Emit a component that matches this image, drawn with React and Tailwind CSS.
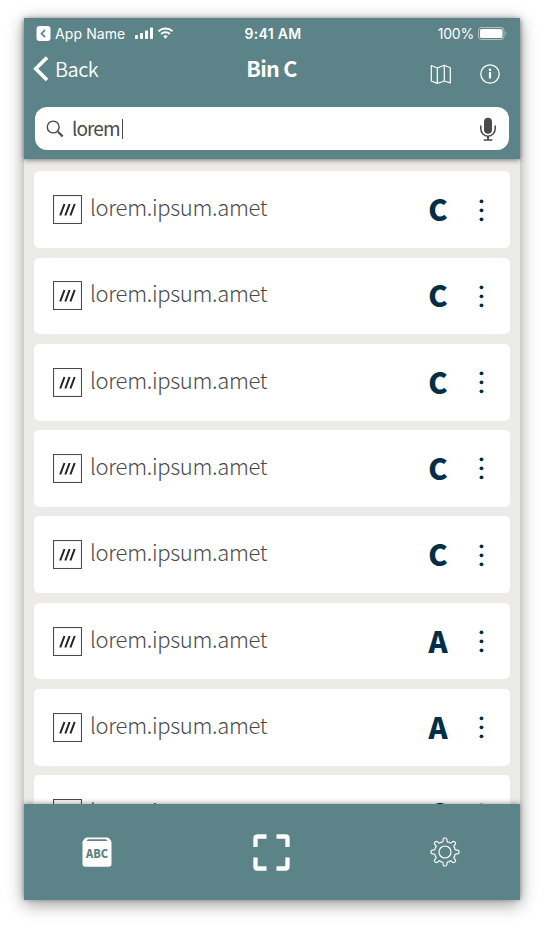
import React from 'react';

const rows = ['C', 'C', 'C', 'C', 'C', 'A', 'A', 'C'];

const gearPath = (() => {
    const at = (deg, r) => {
        const a = (deg * Math.PI) / 180;
        return `${(15 + r * Math.sin(a)).toFixed(2)} ${(15 - r * Math.cos(a)).toFixed(2)}`;
    };
    let d = `M${at(-8.5, 12.6)}`;
    for (let i = 0; i < 8; i++) {
        const t = i * 45;
        d += ` Q${at(t - 7.5, 14)} ${at(t - 3, 14)} L${at(t + 3, 14)} Q${at(t + 7.5, 14)} ${at(t + 8.5, 12.6)}`;
        d += ` C${at(t + 10, 10.2)} ${at(t + 16, 10)} ${at(t + 22.5, 10.6)}`;
        d += ` C${at(t + 29, 10)} ${at(t + 35, 10.2)} ${at(t + 36.5, 12.6)}`;
    }
    return d + 'Z';
})();

function StatusBar() {
    return (
        <div className="h-[30px] grid grid-cols-3 items-center pl-[12px] pr-[12px] font-['Inter',sans-serif] text-[14px]">
            <div className="flex items-center">
                <svg width="15" height="15" viewBox="0 0 15 15">
                    <rect x="0.5" width="14" height="15" rx="3" fill="white" />
                    <path d="M9 3.8 5.5 7.5l3.5 3.7" fill="none" stroke="#5c8387" strokeWidth="1.7" />
                </svg>
                <span className="ml-[4px] tracking-[0.1px] whitespace-nowrap">App Name</span>
                <svg className="ml-[10px] shrink-0" width="39" height="12" viewBox="0 0 39 12" fill="white">
                    <rect x="0" y="8" width="3" height="4" rx="0.7" />
                    <rect x="5" y="6" width="3" height="6" rx="0.7" />
                    <rect x="10" y="3.5" width="3" height="8.5" rx="0.7" />
                    <rect x="15" y="0.5" width="3" height="11.5" rx="0.7" />
                    <path d="M23.5 4.3a10.3 10.3 0 0 1 14 0" fill="none" stroke="white" strokeWidth="2" />
                    <path d="M26.1 7a6.5 6.5 0 0 1 8.8 0" fill="none" stroke="white" strokeWidth="2" />
                    <path d="M28.2 9.2a3.6 3.6 0 0 1 4.6 0L30.5 11.7z" />
                </svg>
            </div>
            <div className="pl-[2px] text-center font-semibold tracking-[0.3px]">9:41 AM</div>
            <div className="flex items-center justify-end">
                <span className="tracking-[-0.2px]">100%</span>
                <svg className="ml-[4px]" width="30" height="13" viewBox="0 0 30 13">
                    <rect x="0.5" y="0.5" width="25.5" height="12" rx="3" fill="none" stroke="white" strokeOpacity="0.5" />
                    <rect x="2" y="2" width="22.5" height="9" rx="1.5" fill="white" />
                    <path d="M27.5 4.5q2 2 0 4z" fill="white" fillOpacity="0.5" />
                </svg>
            </div>
        </div>
    );
}

function Header() {
    return (
        <header className="relative z-10 h-[141px] shrink-0 bg-[#5c8387] text-white shadow-[0_1px_5px_rgba(0,0,0,0.5)]">
            <StatusBar />
            <div className="h-[59px] grid grid-cols-3 pl-[9px] pr-[20px]">
                <div className="flex items-start pt-[8px]">
                    <svg width="16" height="26" viewBox="0 0 16 26">
                        <path d="M14 1.5 2.8 12.8 14 24" fill="none" stroke="white" strokeWidth="3.6" />
                    </svg>
                    <span className="ml-[6px] mt-[1px] text-[20px] leading-[24px] font-[350] tracking-[-0.5px]">Back</span>
                </div>
                <h1 className="pt-[8px] pl-[10px] text-center text-[21.5px] leading-[24px] font-bold tracking-[-0.7px] whitespace-nowrap">Bin C</h1>
                <div className="flex justify-end items-start gap-[28px] pt-[16px]">
                    <svg width="22" height="21" viewBox="0 0 22 21" fill="none" stroke="white" strokeWidth="1.2" strokeLinejoin="round">
                        <path d="M1.3 1.5 7.3 4l7-2.8 6 2.5V19l-6-2-7 2.5-6-2.5zM7.3 4v15.5M14.3 1.2V17" />
                    </svg>
                    <svg width="20" height="20" viewBox="0 0 20 20" fill="none" stroke="white">
                        <circle cx="10" cy="10" r="9.2" strokeWidth="1.3" />
                        <path d="M10 8.8v4.8" strokeWidth="2.2" strokeLinecap="round" />
                        <circle cx="10" cy="5.8" r="1.3" fill="white" stroke="none" />
                    </svg>
                </div>
            </div>
            <div className="mx-[11px] h-[43px] rounded-[12px] bg-white flex items-center pl-[11px] pr-[13px] text-[#4a4a4a]">
                <svg width="18" height="18" viewBox="0 0 18 18" fill="none" stroke="#4a4a4a">
                    <circle cx="7.2" cy="7" r="5.9" strokeWidth="1.4" />
                    <path d="M11.3 11.2l1.5 1.5" strokeWidth="1.4" />
                    <path d="M12.5 12.3l4.2 4.2" strokeWidth="2.2" />
                </svg>
                <span className="ml-[8px] mt-[-2px] text-[19px] leading-[24px] tracking-[-0.9px]">lorem</span>
                <span className="ml-[2px] w-px h-[20px] bg-[#4a4a4a]" />
                <svg className="ml-auto" width="16" height="24" viewBox="0 0 16 24" fill="none" stroke="#4a4a4a">
                    <rect x="4" y="0.8" width="8" height="16" rx="4" fill="#4a4a4a" stroke="none" />
                    <path d="M0.8 8.5V12a7.2 7.2 0 0 0 14.4 0V8.5" strokeWidth="1.5" />
                    <path d="M8 19.2v3.5" strokeWidth="2" />
                    <path d="M4.2 23h7.6" strokeWidth="1.5" strokeLinecap="round" />
                </svg>
            </div>
        </header>
    );
}

function Row({ bin }) {
    return (
        <li className="h-[76.7px] shrink-0 rounded-[5px] bg-white flex items-center pl-[19px] pr-[26px]">
            <svg width="29" height="29" viewBox="0 0 29 29">
                <rect x="0.5" y="0.5" width="28" height="28" fill="none" stroke="#4a4a4a" strokeWidth="1.1" />
                <path d="M7.2 20.5l4.3-11.5M12.3 20.5l4.3-11.5M17.4 20.5l4.3-11.5" stroke="#222" strokeWidth="2" />
            </svg>
            <span className="ml-[8px] mt-[-7px] text-[22px] leading-[28px] font-light tracking-[-0.32px] text-[#4a4a4a]">lorem.ipsum.amet</span>
            <span className="ml-auto mt-[-3px] w-[24px] text-center text-[29px] leading-[32px] font-black text-[#022e47]">{bin}</span>
            <svg className="ml-[29px]" width="5" height="24" viewBox="0 0 5 24" fill="#022e47">
                <circle cx="2.5" cy="3.3" r="1.9" />
                <circle cx="2.5" cy="12.3" r="1.9" />
                <circle cx="2.5" cy="21.3" r="1.9" />
            </svg>
        </li>
    );
}

function TabBar() {
    return (
        <nav className="relative z-10 h-[96px] shrink-0 bg-[#5c8387] flex items-center justify-between pl-[58px] pr-[60px] shadow-[0_-1px_5px_rgba(0,0,0,0.35)]">
            <svg width="30" height="30" viewBox="0 0 30 30">
                <path d="M5 0.5h20q1.5 0 2.5 1.3l1.3 1.7q.7 1 .7 2V27q0 2.7-2.7 2.7H3.2Q.5 29.7.5 27V5.5q0-1 .7-2L2.5 1.8Q3.5.5 5 .5z" fill="white" />
                <path d="M6 2.3h18l1.5 1.7H4.5z" fill="#5c8387" />
                <text x="15" y="20.5" textAnchor="middle" textLength="22" lengthAdjust="spacingAndGlyphs" fontFamily="Noto Sans CJK SC, sans-serif" fontWeight="900" fontSize="12" fill="#5c8387">ABC</text>
            </svg>
            <svg width="37" height="37" viewBox="0 0 37 37" fill="none" stroke="white" strokeWidth="4.3" strokeLinejoin="round">
                <path d="M2.5 13V4.5q0-2 2-2H13.5M23.5 2.5h9q2 0 2 2V13M34.5 23.5v9q0 2-2 2h-9M13.5 34.5h-9q-2 0-2-2v-9" />
            </svg>
            <svg width="30" height="30" viewBox="0 0 30 30" fill="none" stroke="white" strokeWidth="1.2">
                <path d={gearPath} strokeLinejoin="round" />
                <circle cx="15" cy="15" r="6" />
            </svg>
        </nav>
    );
}

export default function App() {
    return (
        <div className="h-[930px] w-[544px] overflow-hidden bg-white px-[24px] pt-[18px] font-['Noto_Sans_CJK_SC',sans-serif]">
            <div className="h-[882px] w-[496px] flex flex-col bg-[#ecebe7] shadow-[0_4px_16px_rgba(0,0,0,0.4)]">
                <Header />
                <ul className="flex-1 min-h-0 overflow-hidden px-[10px] pt-[12.3px] flex flex-col gap-[9.6px]">
                    {rows.map((bin, i) => (
                        <Row key={i} bin={bin} />
                    ))}
                </ul>
                <TabBar />
            </div>
        </div>
    );
}
